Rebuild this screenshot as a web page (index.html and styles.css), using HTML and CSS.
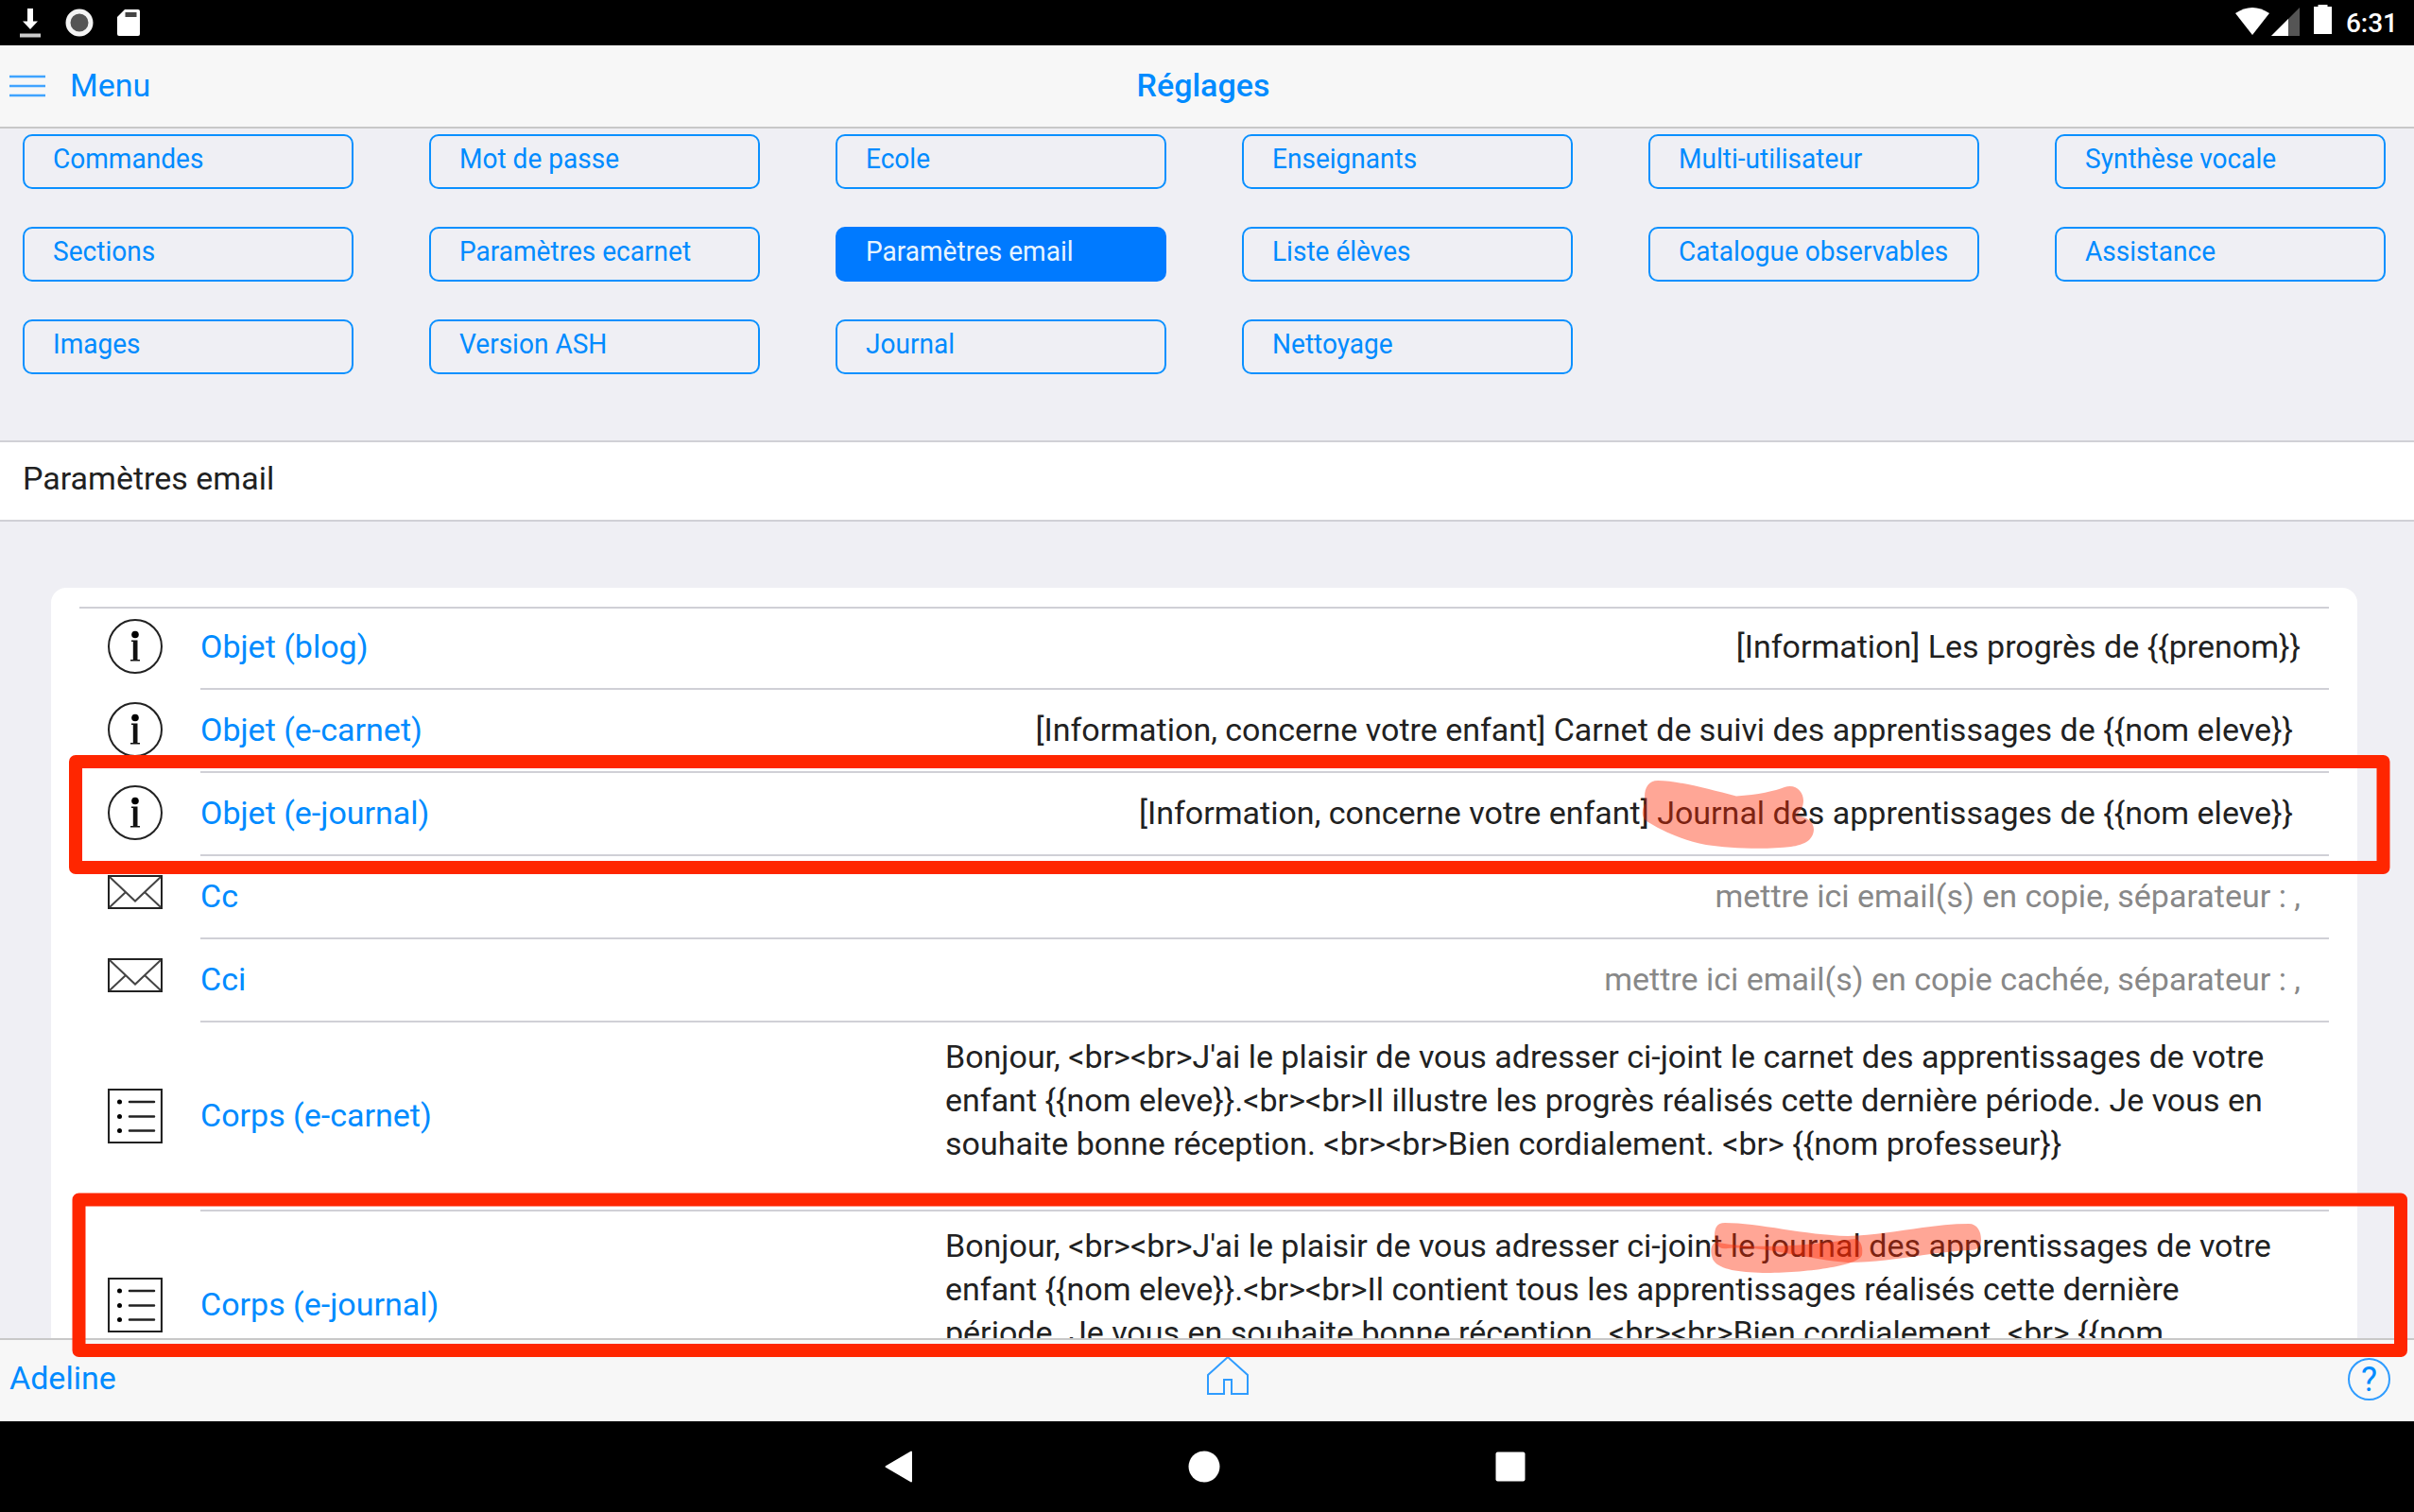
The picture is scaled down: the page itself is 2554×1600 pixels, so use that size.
FILE: index.html
```html
<!DOCTYPE html>
<html lang="fr">
<head>
<meta charset="utf-8">
<title>Réglages</title>
<link rel="stylesheet" href="styles.css">
</head>
<body>
<div class="screen">
  <div class="status">
    <div class="status-left">
      <svg width="24" height="34" viewBox="0 0 24 34"><path d="M12 2v16" stroke="#fff" stroke-width="6" fill="none"/><path d="M1 30.500h22" stroke="#ccc" stroke-width="4"/><path d="M4 15.500h16L12 24z" fill="#fff"/></svg>
      <svg width="30" height="30" viewBox="0 0 30 30"><circle cx="15" cy="15" r="12" fill="#555" stroke="#f4f4f4" stroke-width="5"/></svg>
      <svg width="24" height="30" viewBox="0 0 24 30"><path d="M8 1h14a2 2 0 0 1 2 2v24a2 2 0 0 1-2 2H2a2 2 0 0 1-2-2V9z" fill="#fff"/><path d="M8.500 4h12v5h-12z" fill="#444"/></svg>
    </div>
    <div class="status-right">
      <svg class="wifi" width="36" height="29" viewBox="0 0 36 29"><path d="M0 6Q18-6 36 6L18 29z" fill="#fff"/></svg>
      <svg class="cell" width="30" height="30" viewBox="0 0 30 30"><path d="M30 0v30H0z" fill="#555"/><path d="M18 12v18H0z" fill="#fff"/></svg>
      <svg class="battery" width="19" height="31" viewBox="0 0 19 31"><path d="M4.500 0h10v2h4.500v29H0V2h4.500z" fill="#fff"/></svg>
      <span class="clock">6:31</span>
    </div>
  </div>
  <header class="navbar">
    <div class="nav-menu">
      <svg width="38" height="24" viewBox="0 0 38 24"><path d="M0 2h38M0 12h38M0 22h38" stroke="#3fa3ff" stroke-width="2.500"/></svg>
      <span>Menu</span>
    </div>
    <h1>Réglages</h1>
    <div></div>
  </header>
  <main class="content">
    <nav class="tabs">
      <a><span>Commandes</span></a><a><span>Mot de passe</span></a><a><span>Ecole</span></a><a><span>Enseignants</span></a><a><span>Multi-utilisateur</span></a><a><span>Synthèse vocale</span></a>
      <a><span>Sections</span></a><a><span>Paramètres ecarnet</span></a><a class="active"><span>Paramètres email</span></a><a><span>Liste élèves</span></a><a><span>Catalogue observables</span></a><a><span>Assistance</span></a>
      <a><span>Images</span></a><a><span>Version ASH</span></a><a><span>Journal</span></a><a><span>Nettoyage</span></a>
    </nav>
    <h2 class="section-title">Paramètres email</h2>
    <section class="card">
      <div class="row first">
        <svg class="icon" viewBox="0 0 58 58"><use href="#info"/></svg>
        <div class="cell-body"><label>Objet (blog)</label><span class="value">[Information] Les progrès de {{prenom}}</span></div>
      </div>
      <div class="row">
        <svg class="icon" viewBox="0 0 58 58"><use href="#info"/></svg>
        <div class="cell-body"><label>Objet (e-carnet)</label><span class="value inset">[Information, concerne votre enfant] Carnet de suivi des apprentissages de {{nom eleve}}</span></div>
      </div>
      <div class="row">
        <svg class="icon" viewBox="0 0 58 58"><use href="#info"/></svg>
        <div class="cell-body"><label>Objet (e-journal)</label><span class="value inset">[Information, concerne votre enfant] Journal des apprentissages de {{nom eleve}}</span></div>
      </div>
      <div class="row">
        <svg class="icon mail" viewBox="0 0 58 36"><use href="#mail"/></svg>
        <div class="cell-body"><label>Cc</label><span class="value hint">mettre ici email(s) en copie, séparateur : ,</span></div>
      </div>
      <div class="row">
        <svg class="icon mail" viewBox="0 0 58 36"><use href="#mail"/></svg>
        <div class="cell-body"><label>Cci</label><span class="value hint">mettre ici email(s) en copie cachée, séparateur : ,</span></div>
      </div>
      <div class="row tall">
        <svg class="icon" viewBox="0 0 58 58"><use href="#list"/></svg>
        <div class="cell-body"><label>Corps (e-carnet)</label><p>Bonjour, &lt;br&gt;&lt;br&gt;J'ai le plaisir de vous adresser ci-joint le carnet des apprentissages de votre<br>enfant {{nom eleve}}.&lt;br&gt;&lt;br&gt;Il illustre les progrès réalisés cette dernière période. Je vous en<br>souhaite bonne réception. &lt;br&gt;&lt;br&gt;Bien cordialement. &lt;br&gt; {{nom professeur}}</p></div>
      </div>
      <div class="row tall">
        <svg class="icon" viewBox="0 0 58 58"><use href="#list"/></svg>
        <div class="cell-body"><label>Corps (e-journal)</label><p>Bonjour, &lt;br&gt;&lt;br&gt;J'ai le plaisir de vous adresser ci-joint le journal des apprentissages de votre<br>enfant {{nom eleve}}.&lt;br&gt;&lt;br&gt;Il contient tous les apprentissages réalisés cette dernière<br>période. Je vous en souhaite bonne réception. &lt;br&gt;&lt;br&gt;Bien cordialement. &lt;br&gt; {{nom</p></div>
      </div>
    </section>
  </main>
  <footer class="toolbar">
    <span>Adeline</span>
    <svg class="home" width="46" height="44" viewBox="0 0 46 44"><path d="M2 21 23 2 44 21V41H27V26H19V41H2z" fill="none" stroke="#2f9cff" stroke-width="2"/></svg>
    <div class="help">?</div>
  </footer>
  <div class="sysnav">
    <svg width="30" height="34" viewBox="0 0 30 34"><path d="M28 1.500v31L1.500 17z" fill="#fff" stroke="#fff" stroke-width="2" stroke-linejoin="round"/></svg>
    <svg width="34" height="34" viewBox="0 0 34 34"><circle cx="17" cy="17" r="16.500" fill="#fff"/></svg>
    <svg width="32" height="32" viewBox="0 0 32 32"><rect x=".5" y=".5" width="31" height="31" rx="2" fill="#fff"/></svg>
  </div>
  <svg class="marks" viewBox="0 0 2554 1600">
    <g fill="none" stroke="#ff2600" stroke-width="14" stroke-linejoin="round">
      <rect x="80" y="806" width="2441.500" height="112"/>
      <rect x="83.500" y="1269.500" width="2456.500" height="159.500"/>
    </g>
    <g fill="#ff2600" fill-opacity=".41">
      <path d="M1754 826C1775 826 1808 835 1837 842.500C1860 841 1878 837 1888 833C1900 829 1908 838 1908 847C1908 854 1905 859 1900 863C1912 864 1919 870 1919 878C1918 890 1908 894 1895 896C1870 899 1830 898 1805 894C1778 889 1755 877 1742 869C1736 864 1737 856 1741 850C1738 838 1742 826 1754 826z"/>
      <path d="M1825 1294C1860 1294 1910 1307 1955 1308C2000 1307 2040 1295 2083 1295C2092 1295 2096 1303 2096 1312C2096 1320 2091 1323 2084 1323C2040 1325 2000 1336 1955 1336C1910 1333 1870 1318 1828 1321C1817 1323 1814 1315 1814 1308C1814 1300 1816 1294 1825 1294z"/>
      <path d="M1818 1315C1860 1323 1920 1317 1962 1311C1970 1312 1971 1322 1970 1328C1966 1340 1910 1347 1865 1347C1840 1346 1820 1344 1813 1334C1809 1327 1809 1313 1818 1315z"/>
    </g>
  </svg>
</div>
<svg class="defs" width="0" height="0">
  <symbol id="info" viewBox="0 0 58 58"><circle cx="29" cy="29" r="28" fill="none" stroke="#222" stroke-width="2"/><circle cx="29" cy="16.500" r="3.800"/><path d="M25 22.500h6.500v20.500h2.500v1.500H24v-1.500h2.800V24H25z" fill="#111"/></symbol>
  <symbol id="mail" viewBox="0 0 58 36"><path d="M1 1h56v34H1z" fill="none" stroke="#222" stroke-width="2"/><path d="M2 2l27 25.500L56 2M2 34l17-16M56 34 39 18" fill="none" stroke="#444" stroke-width="2"/></symbol>
  <symbol id="list" viewBox="0 0 58 58"><path d="M1 1h56v56H1z" fill="none" stroke="#222" stroke-width="2.200"/><path d="M23 14h26M23 29.500h26M23 44.500h26" stroke="#222" stroke-width="2.500" stroke-linecap="round"/><circle cx="12.500" cy="14" r="2.500"/><circle cx="12.500" cy="29.500" r="2.500"/><circle cx="12.500" cy="44.500" r="2.500"/></symbol>
</svg>
</body>
</html>
```
FILE: styles.css
```css
* { box-sizing: border-box; }
body { margin: 0; background: #000; font-family: Roboto, "Liberation Sans", sans-serif; font-size: 34px; color: #212121; }
svg { display: block; flex: none; }
.defs { position: absolute; }
.screen { position: relative; width: 2554px; height: 1600px; display: flex; flex-direction: column; overflow: hidden; }
.status { height: 48px; flex: none; background: #000; display: flex; justify-content: space-between; }
.status-left { display: flex; align-items: center; padding-left: 20px; gap: 25px; }
.status-right { display: flex; padding-right: 17px; }
.wifi { margin-top: 8px; }
.cell { margin: 8px 0 0 2px; }
.battery { margin: 5px 0 0 15px; }
.clock { color: #fff; font-size: 28px; font-weight: 500; line-height: 49px; margin-left: 15px; }
.navbar { height: 88px; flex: none; background: #f7f7f7; border-bottom: 2px solid #c8c8c8; display: grid; grid-template-columns: 1fr auto 1fr; align-items: center; color: #008bff; padding: 0 10px; }
.nav-menu { display: flex; align-items: center; gap: 26px; }
.nav-menu span { padding-bottom: 2px; }
.navbar h1 { margin: 0 8px 0 0; padding-bottom: 2px; font-size: 34px; font-weight: 500; }
.content { height: 1280px; flex: none; background: #efeff4; overflow: hidden; }
.tabs { display: grid; grid-template-columns: repeat(6, 350px); column-gap: 80px; row-gap: 40px; padding: 6px 24px 0; height: 330px; align-content: start; }
.tabs a { height: 58px; border: 2px solid #0a90ff; border-radius: 10px; padding-left: 30px; font-size: 30px; line-height: 48px; color: #008bff; white-space: nowrap; }
.tabs span { display: inline-block; transform: scaleX(.935); transform-origin: left; }
.tabs .active { background: #007aff; border-color: #007aff; color: #e6f4ff; }
.section-title { margin: 0; height: 86px; background: #fff; border: solid #d0d0d6; border-width: 2px 0; padding-left: 24px; font-weight: 400; font-size: 34px; line-height: 76px; }
.card { margin: 70px 60px 0 54px; background: #fff; border-radius: 16px; padding: 20px 30px 0; height: 900px; }
.row { display: flex; height: 88px; padding-left: 30px; }
.row.first { border-top: 2px solid #d0d0d6; }
.icon { width: 58px; height: 58px; margin-top: 13px; }
.first .icon { margin-top: 11px; }
.mail { height: 36px; margin-top: 20px; }
.cell-body { flex: 1; margin-left: 40px; border-bottom: 2px solid #d0d0d6; display: flex; justify-content: space-between; line-height: 84px; white-space: nowrap; }
.first .cell-body { line-height: 80px; }
label { color: #008bff; }
.value { padding-right: 30px; }
.value.inset { padding-right: 38px; }
.hint { color: #888; }
.row.tall { height: 200px; }
.tall .icon { margin-top: 70px; }
.tall label { line-height: 196px; }
.tall p { margin: 13px 0 0; width: 1464px; line-height: 46px; }
.toolbar { height: 88px; flex: none; background: #f7f7f7; border-top: 2px solid #c8c8c8; display: grid; grid-template-columns: 1fr auto 1fr; color: #008bff; line-height: 81px; padding: 0 25px 0 10px; }
.home { margin: 16px 0 0 58px; }
.help { justify-self: end; width: 45px; height: 45px; margin-top: 19px; border: 2px solid #2f9cff; border-radius: 50%; text-align: center; line-height: 42px; font-size: 36px; }
.sysnav { height: 96px; background: #000; display: flex; justify-content: center; align-items: center; gap: 291px; padding-right: 5px; }
.marks { position: absolute; left: 0; top: 0; width: 2554px; height: 1600px; }
```
